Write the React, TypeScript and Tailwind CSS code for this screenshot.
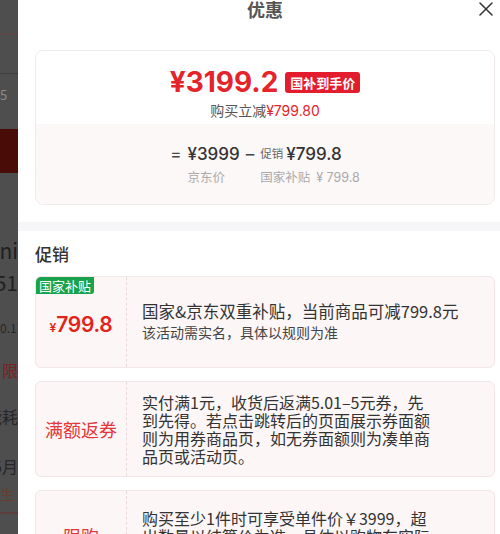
import React from 'react';

interface Promo {
  label: React.ReactNode;
  lines: React.ReactNode;
  tag?: string;
}

const priceFont = "font-['Inter','Noto_Sans_CJK_SC',sans-serif]";

const promos: Promo[] = [
  {
    tag: '国家补贴',
    label: (
      <span className={`${priceFont} text-[#e2231a]`}>
        <span className="text-[12px] font-semibold">¥</span>
        <span className="text-[21px] font-semibold tracking-[-0.3px]">799.8</span>
      </span>
    ),
    lines: (
      <div className="whitespace-nowrap">
        <p className="text-[16.5px] leading-[21px] text-[#333]">国家&amp;京东双重补贴，当前商品可减799.8元</p>
        <p className="text-[14px] leading-[21px] text-[#444]">该活动需实名，具体以规则为准</p>
      </div>
    ),
  },
  {
    label: <span className="text-[18px] text-[#e3353a]">满额返券</span>,
    lines: (
      <p className="w-[292px] text-[16px] leading-[18px] text-[#333]">
        实付满1元，收货后返满5.01–5元券，先到先得。若点击跳转后的页面展示券面额则为用券商品页，如无券面额则为凑单商品页或活动页。
      </p>
    ),
  },
  {
    label: <span className="text-[18px] text-[#e3353a]">限购</span>,
    lines: (
      <p className="w-[292px] text-[16px] leading-[18px] text-[#333]">
        购买至少1件时可享受单件价￥3999，超出数量以结算价为准，具体以购物车实际价格为准
      </p>
    ),
  },
];

const StripRow = ({ h, className, children }: { h: string; className?: string; children?: React.ReactNode }) => (
  <div className={`flex shrink-0 items-center whitespace-nowrap ${h} ${className || 'justify-end'}`}>{children}</div>
);

const App: React.FC = () => {
  return (
    <div className="flex h-[534px] w-[500px] overflow-hidden bg-white font-['Noto_Sans_CJK_SC',sans-serif]">
      {/* dimmed page behind the sheet */}
      <div className="flex w-[18px] shrink-0 flex-col overflow-hidden bg-[#4e4e4e]">
        <StripRow h="h-[33px]" />
        <StripRow h="h-[2px]" className="bg-[#5f4646]" />
        <StripRow h="h-[38px]" />
        <StripRow h="h-[1px]" className="bg-[#3f3f3f]" />
        <StripRow h="h-[42px]" className="justify-start text-[13px] text-[#8c8c8c]">5</StripRow>
        <StripRow h="h-[13px]" />
        <StripRow h="h-[44px]" className="bg-[#4a0c07]" />
        <StripRow h="h-[65px]" />
        <StripRow h="h-[26px]" className="justify-end text-[21px] text-[#1f1f1f]">Mini</StripRow>
        <StripRow h="h-[6px]" />
        <StripRow h="h-[26px]" className="justify-end text-[21px] text-[#1f1f1f]">751</StripRow>
        <StripRow h="h-[23px]" />
        <StripRow h="h-[18px]" className="justify-start text-[12px] text-[#262626]">0.17</StripRow>
        <StripRow h="h-[23px]" />
        <StripRow h="h-[20px]" className="justify-end text-[16px] text-[#7b1f1f]">限</StripRow>
        <StripRow h="h-[26px]" />
        <StripRow h="h-[20px]" className="justify-end text-[16px] text-[#262626]">能耗</StripRow>
        <StripRow h="h-[30px]" />
        <StripRow h="h-[20px]" className="justify-end text-[16px] text-[#262626]">5月</StripRow>
        <StripRow h="h-[9px]" />
        <StripRow h="h-[18px]" className="justify-start text-[14px] text-[#6b3b2b]">生</StripRow>
        <StripRow h="h-[9px]" />
        <StripRow h="h-[2px]" className="bg-[#5c3e3e]" />
      </div>

      {/* sheet */}
      <div className="w-[494px] shrink-0 bg-white">
        <div className="relative flex h-[18px] items-center justify-center">
          <span className="text-[18px] font-bold leading-[18px] text-[#555]">优惠</span>
          <svg className="absolute right-[19px] top-[2px]" width="14" height="14" viewBox="0 0 14 14" fill="none">
            <path d="M1 1L13 13M13 1L1 13" stroke="#333" strokeWidth="1.5" strokeLinecap="round" />
          </svg>
        </div>

        <div className="mx-[17px] mt-[32px] overflow-hidden rounded-[8px] border border-[#f1eaea]">
          <div className="flex h-[73px] flex-col items-center bg-white pt-[15px]">
            <div className="flex items-center gap-[7px]">
              <span className={`${priceFont} text-[28px] font-bold leading-[32px] text-[#e4232b]`}>¥3199.2</span>
              <span className="rounded-[3px] bg-[#e31d2d] px-[5px] text-[13px] font-bold leading-[21px] text-white">国补到手价</span>
            </div>
            <div className="mt-[3px] text-[14px] leading-[18px] text-[#555]">
              购买立减<span className={`${priceFont} text-[#e4232b]`}>¥799.80</span>
            </div>
          </div>
          <div className="flex h-[80px] justify-center bg-[#fdf8f8] pt-[19px]">
            <div className="flex items-start gap-[6px]">
              <span className={`${priceFont} text-[17px] leading-[22px] text-[#444]`}>=</span>
              <div className="flex flex-col">
                <span className={`${priceFont} text-[17px] font-medium leading-[22px] text-[#333]`}>¥3999</span>
                <span className="mt-[3px] text-[12.5px] leading-[18px] text-[#aaa]">京东价</span>
              </div>
              <span className={`${priceFont} text-[17px] leading-[22px] text-[#444]`}>–</span>
              <div className="flex flex-col">
                <div className="flex items-center gap-[3px]">
                  <span className="text-[11.5px] text-[#666]">促销</span>
                  <span className={`${priceFont} text-[17px] font-medium leading-[22px] text-[#333]`}>¥799.8</span>
                </div>
                <span className="mt-[3px] text-[12.5px] leading-[18px] text-[#aaa]">
                  国家补贴<span className={`${priceFont} ml-[6px]`}>¥ 799.8</span>
                </span>
              </div>
            </div>
          </div>
        </div>

        <div className="mt-[17px] h-[9px] bg-[#f6f6f9]" />

        <div className="px-[17px]">
          <h2 className="mt-[11px] text-[17px] font-medium leading-[24px] text-[#333]">促销</h2>
          <div className="mt-[10px] flex flex-col gap-[13px]">
            {promos.map((p, i) => (
              <div key={i} className="relative flex min-h-[92px] overflow-hidden rounded-[6px] border border-[#f3e6e8] bg-[#fdf6f7]">
                {p.tag && (
                  <span className="absolute left-0 top-0 rounded-br-[3px] bg-[#17a24b] px-[3px] text-[13px] leading-[17px] text-white">
                    {p.tag}
                  </span>
                )}
                <div className={`flex w-[91px] shrink-0 items-center justify-center border-r border-dashed border-[#ead7da] ${p.tag ? 'pt-[6px]' : ''}`}>
                  {p.label}
                </div>
                <div className="flex items-center py-[11px] pl-[15px]">{p.lines}</div>
              </div>
            ))}
          </div>
        </div>
      </div>
    </div>
  );
};

export default App;
